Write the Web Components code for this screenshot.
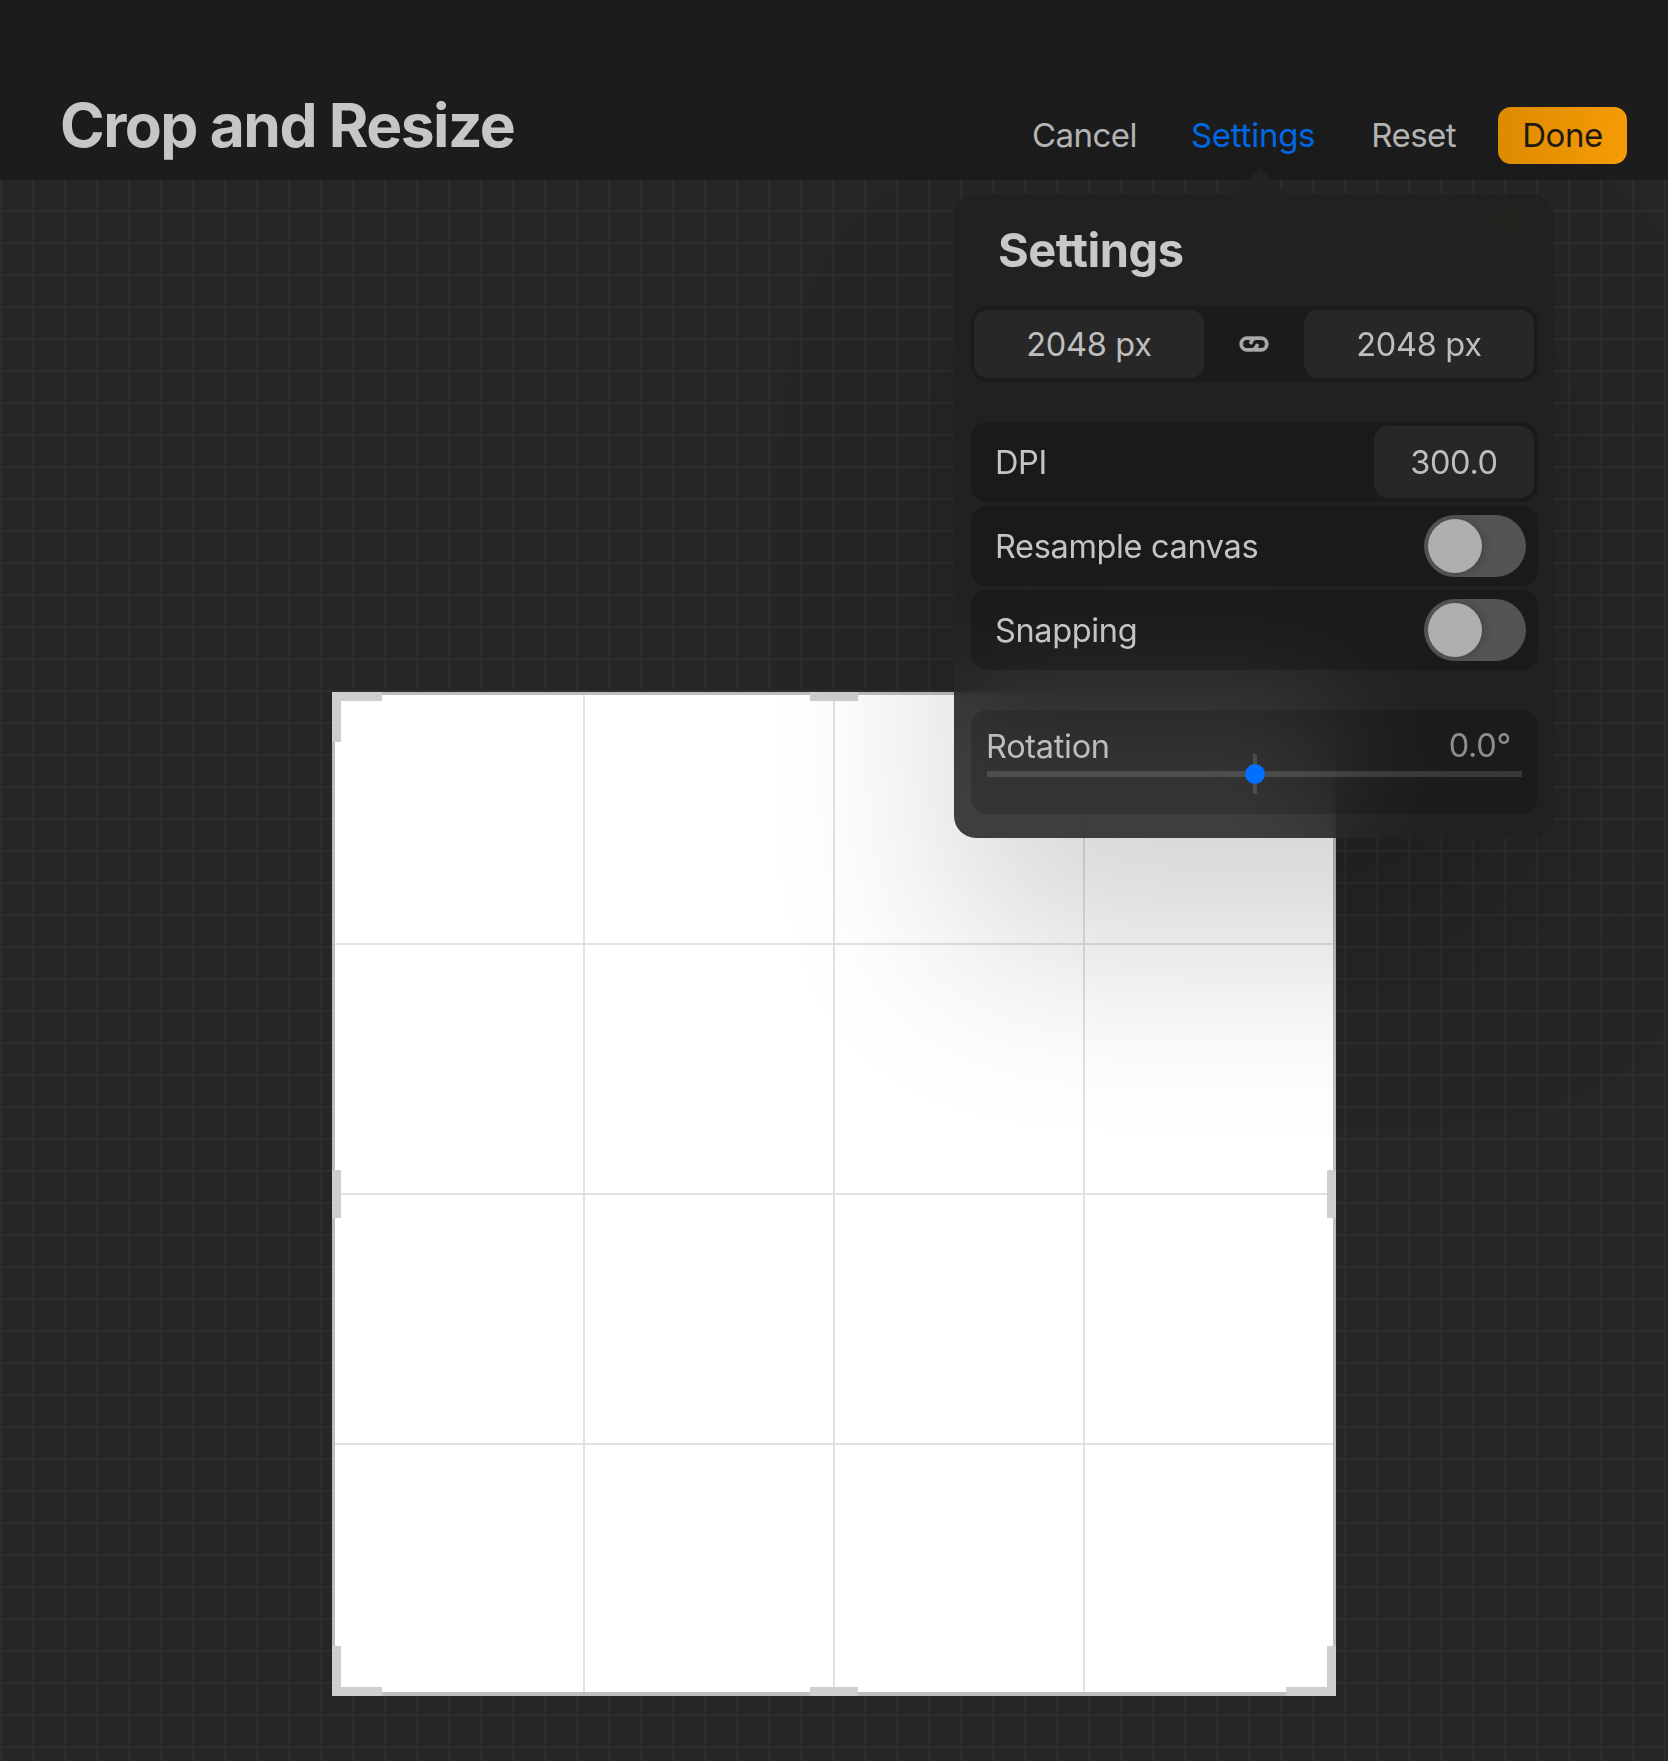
<!DOCTYPE html>
<html lang="en">
    <head>
        <meta charset="UTF-8" />
        <title>Crop and Resize</title>
        <style>
            html, body { margin: 0; background: #262626; }
            body { font-family: Inter, "Liberation Sans", sans-serif; }
        </style>
    </head>
    <body>
        <crop-screen>
            <top-bar slot="bar" title-text="Crop and Resize">
                <nav-action>Cancel</nav-action>
                <nav-action active>Settings</nav-action>
                <nav-action>Reset</nav-action>
                <done-button>Done</done-button>
            </top-bar>
            <crop-canvas slot="canvas"></crop-canvas>
            <settings-popover slot="popover" heading="Settings">
                <size-fields width-value="2048 px" height-value="2048 px"></size-fields>
                <div class="options">
                    <setting-row label="DPI" field><value-field>300.0</value-field></setting-row>
                    <setting-row label="Resample canvas"><toggle-switch></toggle-switch></setting-row>
                    <setting-row label="Snapping"><toggle-switch></toggle-switch></setting-row>
                </div>
                <rotation-slider label="Rotation" value="0.0°"></rotation-slider>
            </settings-popover>
        </crop-screen>

        <script>
            class CropScreen extends HTMLElement {
                connectedCallback() {
                    this.attachShadow({ mode: "open" }).innerHTML = `
                        <style>
                            :host { display: block; width: 1668px; height: 1761px; overflow: hidden; }
                            .work {
                                position: relative;
                                box-sizing: border-box;
                                height: 1581px;
                                padding-top: 512px;
                                display: flex;
                                justify-content: center;
                                align-items: flex-start;
                                background-color: #262626;
                                background-image:
                                    linear-gradient(to right, #2e2e2e 2px, transparent 2px),
                                    linear-gradient(to bottom, #2e2e2e 2px, transparent 2px);
                                background-size: 32px 32px;
                                background-position: 0 30px;
                            }
                        </style>
                        <slot name="bar"></slot>
                        <div class="work">
                            <slot name="canvas"></slot>
                            <slot name="popover"></slot>
                        </div>`;
                }
            }

            class TopBar extends HTMLElement {
                connectedCallback() {
                    this.attachShadow({ mode: "open" }).innerHTML = `
                        <style>
                            :host {
                                display: flex;
                                box-sizing: border-box;
                                height: 180px;
                                background: #1c1c1c;
                                padding: 0 41px 0 60px;
                                justify-content: space-between;
                            }
                            h1 {
                                margin: 91px 0 0;
                                font: 700 60.5px/68px Inter, "Liberation Sans", sans-serif;
                                letter-spacing: -1.55px;
                                color: #c6c6c6;
                            }
                            .actions { display: flex; align-items: flex-start; padding-top: 107px; }
                        </style>
                        <h1>${this.getAttribute("title-text")}</h1>
                        <div class="actions"><slot></slot></div>`;
                }
            }

            class NavAction extends HTMLElement {
                connectedCallback() {
                    this.attachShadow({ mode: "open" }).innerHTML = `
                        <style>
                            :host {
                                display: block;
                                margin-right: 56px;
                                font: 400 33px/57px Inter, "Liberation Sans", sans-serif;
                                letter-spacing: -0.55px;
                                color: #b4b4b4;
                            }
                            :host([active]) { color: #0069e6; letter-spacing: -0.25px; margin-left: -2px; }
                        </style>
                        <slot></slot>`;
                }
            }

            class DoneButton extends HTMLElement {
                connectedCallback() {
                    this.attachShadow({ mode: "open" }).innerHTML = `
                        <style>
                            :host {
                                display: block;
                                box-sizing: border-box;
                                width: 129px;
                                height: 57px;
                                margin-left: -14px;
                                border-radius: 13px;
                                text-align: center;
                                font: 400 33px/57px Inter, "Liberation Sans", sans-serif;
                                letter-spacing: -0.4px;
                                color: #1d1a14;
                                background: linear-gradient(100deg, #dd8a00, #f69c06);
                            }
                        </style>
                        <slot></slot>`;
                }
            }

            class CropCanvas extends HTMLElement {
                connectedCallback() {
                    const cells = Array.from({ length: 16 }, () => "<i></i>").join("");
                    const handles = ["tl", "bl", "br", "t", "b", "l", "r"].map(h => `<b class="${h}"></b>`).join("");
                    this.attachShadow({ mode: "open" }).innerHTML = `
                        <style>
                            :host {
                                display: block;
                                position: relative;
                                box-sizing: border-box;
                                width: 1004px;
                                height: 1004px;
                                background: #fff;
                                border: solid #bdbdbd;
                                border-width: 3px 3px 4px 3px;
                            }
                            .grid {
                                display: grid;
                                height: 100%;
                                overflow: hidden;
                                gap: 2px;
                                grid-template-columns: repeat(4, 248px);
                                grid-template-rows: repeat(4, 248px);
                                background: #e2e2e2;
                            }
                            .grid i { background: #fff; }
                            b { position: absolute; box-sizing: border-box; background: #cecece; }
                            .tl, .bl, .br { width: 50px; height: 50px; background: none; border: 0 solid #cecece; }
                            .tl { left: -3px; top: -3px; border-width: 9px 0 0 9px; }
                            .bl { left: -3px; bottom: -4px; border-width: 0 0 9px 9px; }
                            .br { right: -3px; bottom: -4px; border-width: 0 9px 9px 0; }
                            .t, .b { left: 475px; width: 48px; height: 9px; }
                            .t { top: -3px; }
                            .b { bottom: -4px; }
                            .l, .r { top: 475px; width: 9px; height: 48px; }
                            .l { left: -3px; }
                            .r { right: -3px; }
                        </style>
                        <div class="grid">${cells}</div>
                        ${handles}`;
                }
            }

            class SettingsPopover extends HTMLElement {
                connectedCallback() {
                    this.attachShadow({ mode: "open" }).innerHTML = `
                        <style>
                            :host {
                                display: block;
                                position: absolute;
                                left: 954px;
                                top: 14px;
                                box-sizing: border-box;
                                width: 600px;
                                height: 644px;
                                padding: 112px 16px 0 17px;
                                border-radius: 22px;
                                background:
                                    radial-gradient(140px 120px at 92% 4%, rgba(60,40,10,.08), transparent),
                                    rgba(32,32,32,.865);
                                backdrop-filter: blur(60px);
                                box-shadow: 0 115px 190px rgba(0,0,0,.165);
                            }
                            .arrow {
                                position: absolute;
                                left: 278px;
                                top: -26px;
                                width: 56px;
                                height: 28px;
                                background: #222;
                                clip-path: polygon(50% 0, 100% 100%, 0 100%);
                            }
                            h2 {
                                position: absolute;
                                left: 44px;
                                top: 28px;
                                margin: 0;
                                font: 700 47px/56px Inter, "Liberation Sans", sans-serif;
                                letter-spacing: -0.5px;
                                color: #c8c8c8;
                            }
                            ::slotted(.options) { display: flex; flex-direction: column; gap: 4px; margin-top: 40px; }
                        </style>
                        <div class="arrow"></div>
                        <h2>${this.getAttribute("heading")}</h2>
                        <slot></slot>`;
                }
            }

            class SizeFields extends HTMLElement {
                connectedCallback() {
                    this.attachShadow({ mode: "open" }).innerHTML = `
                        <style>
                            :host {
                                display: flex;
                                box-sizing: border-box;
                                height: 76px;
                                padding: 4px 4px 4px 3px;
                                justify-content: space-between;
                                align-items: stretch;
                                border-radius: 16px;
                                background: rgba(0,0,0,.16);
                            }
                            .f {
                                width: 230px;
                                border-radius: 14px;
                                background: #272727;
                                text-align: center;
                                font: 400 32.5px/69px Inter, "Liberation Sans", sans-serif;
                                letter-spacing: -0.3px;
                                color: #bebebe;
                            }
                            svg { align-self: center; }
                        </style>
                        <div class="f">${this.getAttribute("width-value")}</div>
                        <svg width="30" height="16" viewBox="0 0 30 16" fill="none" stroke="#a8a8a8" stroke-width="3.8" stroke-linecap="round">
                            <path d="M14 2.2H8a5.8 5.8 0 0 0 0 11.6h5a5.5 5.5 0 0 0 5-4.5" />
                            <path d="M16 13.8h6a5.8 5.8 0 0 0 0-11.6h-5a5.5 5.5 0 0 0-5 4.5" />
                        </svg>
                        <div class="f">${this.getAttribute("height-value")}</div>`;
                }
            }

            class SettingRow extends HTMLElement {
                connectedCallback() {
                    this.attachShadow({ mode: "open" }).innerHTML = `
                        <style>
                            :host {
                                display: flex;
                                box-sizing: border-box;
                                height: 80px;
                                padding-left: 24px;
                                padding-right: 12px;
                                justify-content: space-between;
                                align-items: center;
                                border-radius: 16px;
                                background: rgba(0,0,0,.18);
                                font: 400 32.5px/40px Inter, "Liberation Sans", sans-serif;
                                letter-spacing: -0.35px;
                                color: #c4c4c4;
                            }
                            :host([field]) { padding-right: 4px; }
                            span { padding-top: 2px; }
                        </style>
                        <span>${this.getAttribute("label")}</span>
                        <slot></slot>`;
                }
            }

            class ValueField extends HTMLElement {
                connectedCallback() {
                    this.attachShadow({ mode: "open" }).innerHTML = `
                        <style>
                            :host {
                                display: block;
                                width: 160px;
                                height: 72px;
                                border-radius: 14px;
                                background: #272727;
                                text-align: center;
                                line-height: 74px;
                                color: #bebebe;
                            }
                        </style>
                        <slot></slot>`;
                }
            }

            class ToggleSwitch extends HTMLElement {
                connectedCallback() {
                    this.attachShadow({ mode: "open" }).innerHTML = `
                        <style>
                            :host {
                                display: flex;
                                box-sizing: border-box;
                                width: 102px;
                                height: 62px;
                                padding: 4px;
                                border-radius: 31px;
                                background: #545454;
                            }
                            i {
                                display: block;
                                width: 54px;
                                height: 54px;
                                border-radius: 50%;
                                background: #afafaf;
                                box-shadow: 3px 0 8px rgba(0,0,0,.18);
                            }
                        </style>
                        <i></i>`;
                }
            }

            class RotationSlider extends HTMLElement {
                connectedCallback() {
                    this.attachShadow({ mode: "open" }).innerHTML = `
                        <style>
                            :host {
                                display: block;
                                box-sizing: border-box;
                                height: 104px;
                                margin-top: 40px;
                                padding: 17px 16px 0;
                                border-radius: 16px;
                                background: rgba(0,0,0,.15);
                            }
                            .top {
                                display: flex;
                                justify-content: space-between;
                                padding-right: 11px;
                                font: 400 32.5px/40px Inter, "Liberation Sans", sans-serif;
                                letter-spacing: -0.3px;
                                color: #bdbdbd;
                            }
                            .top span + span { color: #8e8e8e; margin-top: -1px; }
                            .label { margin-left: -1px; }
                            .track {
                                position: relative;
                                height: 6px;
                                margin-top: 4px;
                                background: rgba(255,255,255,.13);
                            }
                            .tick {
                                position: absolute;
                                left: 266px;
                                top: -17px;
                                width: 4px;
                                height: 40px;
                                background: rgba(255,255,255,.13);
                            }
                            .knob {
                                position: absolute;
                                left: 258px;
                                top: -7px;
                                width: 20px;
                                height: 20px;
                                border-radius: 50%;
                                background: #0070ff;
                            }
                        </style>
                        <div class="top"><span class="label">${this.getAttribute("label")}</span><span>${this.getAttribute("value")}</span></div>
                        <div class="track"><div class="tick"></div><div class="knob"></div></div>`;
                }
            }

            customElements.define("crop-screen", CropScreen);
            customElements.define("top-bar", TopBar);
            customElements.define("nav-action", NavAction);
            customElements.define("done-button", DoneButton);
            customElements.define("crop-canvas", CropCanvas);
            customElements.define("settings-popover", SettingsPopover);
            customElements.define("size-fields", SizeFields);
            customElements.define("setting-row", SettingRow);
            customElements.define("value-field", ValueField);
            customElements.define("toggle-switch", ToggleSwitch);
            customElements.define("rotation-slider", RotationSlider);
        </script>
    </body>
</html>
